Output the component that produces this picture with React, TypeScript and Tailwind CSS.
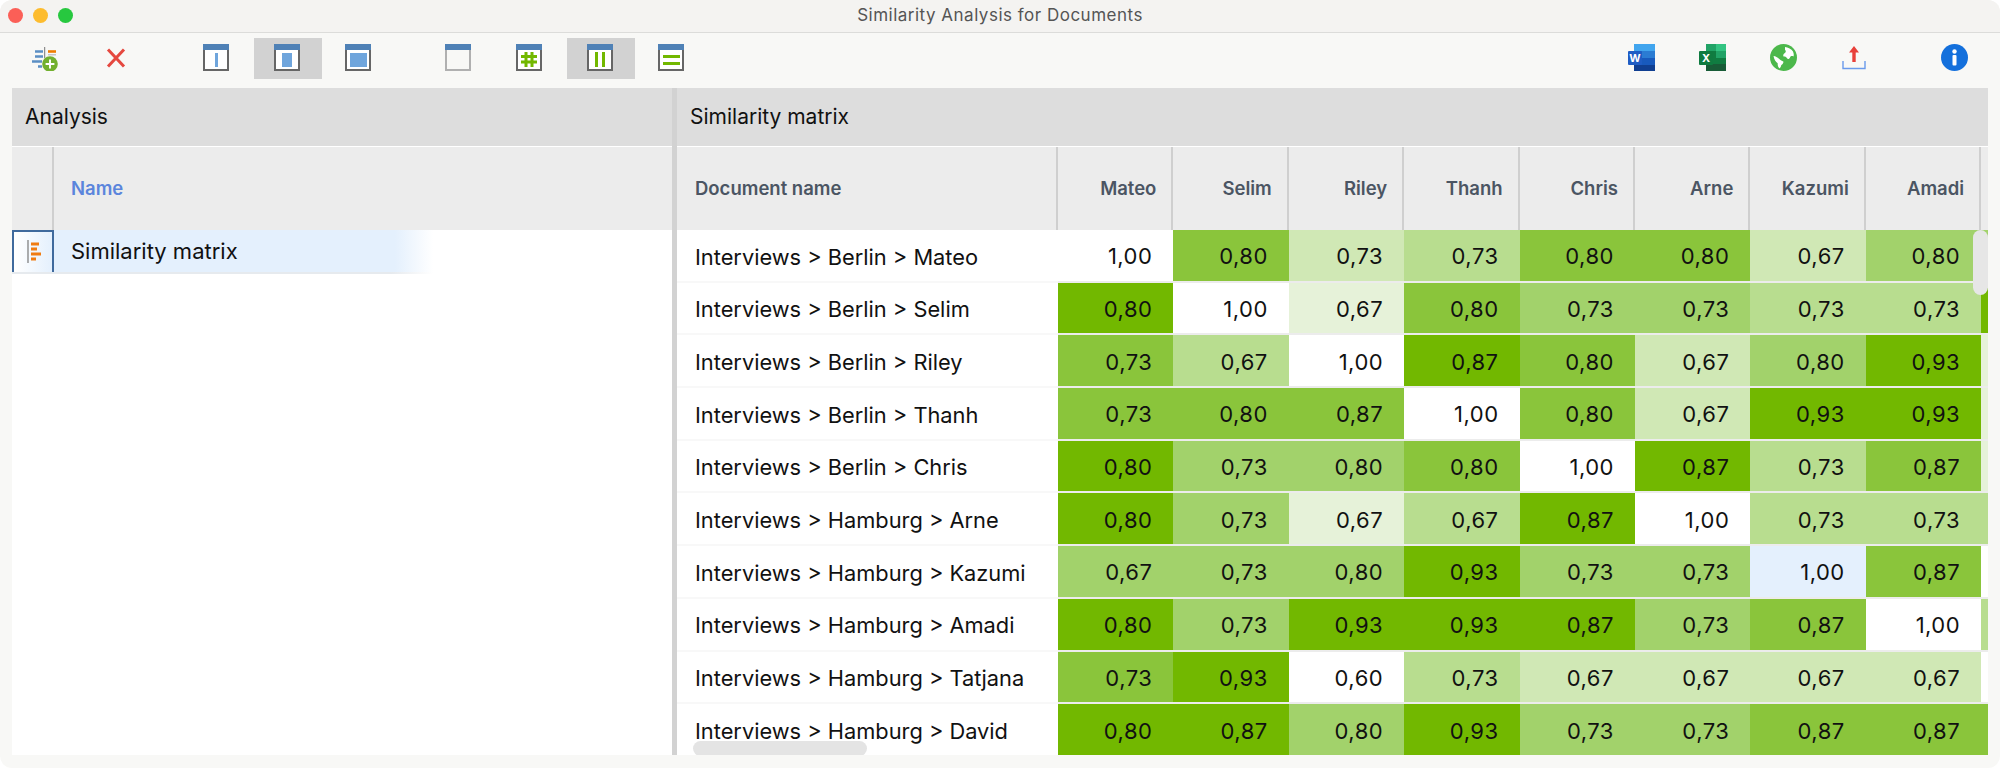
const palette: Record<string, string> = {
  w: 'bg-white',
  b: 'bg-[#e4f0fd]',
  a: 'bg-[#72b800]',
  c: 'bg-[#8ac53b]',
  d: 'bg-[#a2d26b]',
  e: 'bg-[#b8dd8f]',
  f: 'bg-[#d0e8b5]',
  g: 'bg-[#e6f2d9]',
}

const columns = ['Mateo', 'Selim', 'Riley', 'Thanh', 'Chris', 'Arne', 'Kazumi', 'Amadi']

const rows = [
  { name: 'Interviews > Berlin > Mateo', values: ['1,00', '0,80', '0,73', '0,73', '0,80', '0,80', '0,67', '0,80'], shades: 'wcfeccfdd' },
  { name: 'Interviews > Berlin > Selim', values: ['0,80', '1,00', '0,67', '0,80', '0,73', '0,73', '0,73', '0,73'], shades: 'awgcddeea' },
  { name: 'Interviews > Berlin > Riley', values: ['0,73', '0,67', '1,00', '0,87', '0,80', '0,67', '0,80', '0,93'], shades: 'cewacfdag' },
  { name: 'Interviews > Berlin > Thanh', values: ['0,73', '0,80', '0,87', '1,00', '0,80', '0,67', '0,93', '0,93'], shades: 'cccwcfaag' },
  { name: 'Interviews > Berlin > Chris', values: ['0,80', '0,73', '0,80', '0,80', '1,00', '0,87', '0,73', '0,87'], shades: 'addcwaecg' },
  { name: 'Interviews > Hamburg > Arne', values: ['0,80', '0,73', '0,67', '0,67', '0,87', '1,00', '0,73', '0,73'], shades: 'adgeaweee' },
  { name: 'Interviews > Hamburg > Kazumi', values: ['0,67', '0,73', '0,80', '0,93', '0,73', '0,73', '1,00', '0,87'], shades: 'dddaddbcw' },
  { name: 'Interviews > Hamburg > Amadi', values: ['0,80', '0,73', '0,93', '0,93', '0,87', '0,73', '0,87', '1,00'], shades: 'adaaadcwe' },
  { name: 'Interviews > Hamburg > Tatjana', values: ['0,73', '0,93', '0,60', '0,73', '0,67', '0,67', '0,67', '0,67'], shades: 'caweffffw' },
  { name: 'Interviews > Hamburg > David', values: ['0,80', '0,87', '0,80', '0,93', '0,73', '0,73', '0,87', '0,87'], shades: 'aadaddccc' },
]

function WindowIcon({ muted, children }: { muted?: boolean; children?: React.ReactNode }) {
  return (
    <div className={`flex h-[27px] w-[26px] flex-col border-x-2 border-b-2 ${muted ? 'border-[#b0b0b0]' : 'border-[#666]'}`}>
      <div className="-mx-[2px] h-[6px] shrink-0 bg-[#4f81b6]" />
      <div className={`flex flex-1 items-center justify-center gap-[4px] ${muted ? 'bg-[#f8f8f6]' : 'bg-white'}`}>{children}</div>
    </div>
  )
}

function ToolButton({ active, children }: { active?: boolean; children: React.ReactNode }) {
  return (
    <div className="flex h-[41px] w-[71px] items-center justify-center">
      <div className={`flex h-[41px] w-[68px] items-center justify-center pb-[2px] pr-[1px] ${active ? 'bg-[#d2d2d2]' : ''}`}>{children}</div>
    </div>
  )
}

function AddIcon() {
  return (
    <svg width="30" height="26" viewBox="30 44 30 26">
      <path d="M44.7 46v11" stroke="#777" strokeWidth="1" />
      <path d="M35 50.5h8M35 55.5h8M32 60.5h10M38 65.5h4" stroke="#5b8fc4" strokeWidth="2.6" />
      <path d="M48 50.5h8" stroke="#ef7d00" strokeWidth="2.6" />
      <path d="M48 53.8h8" stroke="#b9b9b9" strokeWidth="1.2" />
      <circle cx="50" cy="63" r="7.8" fill="#72b02e" />
      <path d="M50 58.6v8.8M45.6 63h8.8" stroke="#fff" strokeWidth="1.9" />
    </svg>
  )
}

function WordIcon() {
  return (
    <svg width="27" height="27" viewBox="0 0 27 27">
      <rect x="6" y="0" width="21" height="7" fill="#41a5ee" />
      <rect x="6" y="7" width="21" height="7" fill="#2b7cd3" />
      <rect x="6" y="14" width="21" height="7" fill="#185abd" />
      <rect x="6" y="21" width="21" height="6" fill="#103f91" />
      <rect x="0" y="7" width="14" height="14" rx="1" fill="#1f5dc4" />
      <text x="7" y="18" textAnchor="middle" fontSize="11" fontWeight="700" fill="#fff" fontFamily="Inter, sans-serif">W</text>
    </svg>
  )
}

function ExcelIcon() {
  return (
    <svg width="27" height="27" viewBox="0 0 27 27">
      <rect x="7" y="0" width="10" height="7" fill="#21a366" />
      <rect x="17" y="0" width="10" height="7" fill="#33c481" />
      <rect x="7" y="7" width="10" height="13" fill="#107c41" />
      <rect x="17" y="7" width="10" height="7" fill="#21a366" />
      <rect x="17" y="14" width="10" height="6" fill="#107c41" />
      <rect x="7" y="20" width="20" height="7" fill="#185c37" />
      <rect x="0" y="7" width="14" height="14" rx="1" fill="#0f7b40" />
      <text x="7" y="18" textAnchor="middle" fontSize="11" fontWeight="700" fill="#fff" fontFamily="Inter, sans-serif">X</text>
    </svg>
  )
}

function GlobeIcon() {
  return (
    <svg width="27" height="27" viewBox="0 0 27 27">
      <circle cx="13.5" cy="13.5" r="13.5" fill="#4cb84b" />
      <path d="M15 3c3 .4 6.5 1.8 8 4.5.8 2 1 3.5.5 5-1.5-.8-2.8-.5-3.5 1-.6 1.6-2.3 2-3 .8-.7-1.3-1.8-2-3.5-1.8-.6-1.3-.2-2.5 1-3.3 1.500-1 1.800-2 .5-3.500z" fill="#fff" />
      <path d="M3.5 12c2.200.3 4 1.200 5.500 2.800 1.500 1.400 3 2 4.500 3-.2 1.700-1 2.500-2.200 3.200-.3 1.500-.8 2.600-1.800 3.500-1.400-1.500-2-3.300-1.800-5.300-2-1.300-3.500-3.700-4.200-7.200z" fill="#fff" />
    </svg>
  )
}

function UploadIcon() {
  return (
    <svg width="24" height="27" viewBox="0 0 24 27">
      <path d="M1 17v7.500h22V17" fill="none" stroke="#6a9aec" strokeWidth="1.4" />
      <path d="M12 2l5 6.500h-3.300V18h-3.400V8.500H7z" fill="#e8403a" />
    </svg>
  )
}

function InfoIcon() {
  return (
    <svg width="27" height="27" viewBox="0 0 27 27">
      <circle cx="13.5" cy="13.5" r="13.5" fill="#1470dc" />
      <circle cx="13.5" cy="7.5" r="2.2" fill="#fff" />
      <rect x="11.5" y="11" width="4" height="10.5" rx="1" fill="#fff" />
    </svg>
  )
}

function ChartGlyph() {
  return (
    <svg width="14" height="24" viewBox="0 0 14 24">
      <path d="M1 0v23" stroke="#777" strokeWidth="1.2" />
      <path d="M4 4h8M4 9h6M4 14h10M4 19h5" stroke="#f07c12" strokeWidth="3" />
    </svg>
  )
}

export default function App() {
  return (
    <div className="h-[768px] w-[2000px] overflow-hidden bg-white font-['Inter',sans-serif]">
      <div className="flex h-full flex-col rounded-[12px] bg-[#f8f8f6]">
        {/* Title bar */}
        <div className="relative flex h-[33px] shrink-0 items-center justify-center rounded-t-[12px] border-b border-[#dcdcda] bg-[#f4f3f1]">
          <div className="absolute left-[8px] top-[8px] flex gap-[10px]">
            <div className="h-[15px] w-[15px] rounded-full bg-[#fb5f57]" />
            <div className="h-[15px] w-[15px] rounded-full bg-[#fdbc2e]" />
            <div className="h-[15px] w-[15px] rounded-full bg-[#27c83f]" />
          </div>
          <span className="text-[17px] tracking-[0.5px] text-[#555]">Similarity Analysis for Documents</span>
        </div>

        {/* Toolbar */}
        <div className="flex h-[55px] shrink-0 items-start pl-[10px] pr-[10px] pt-[5px]">
          <ToolButton><AddIcon /></ToolButton>
          <ToolButton>
            <svg width="20" height="20" viewBox="0 0 20 20"><path d="M2 1.5l16 17M18 1.5l-16 17" stroke="#e5483f" strokeWidth="3" /></svg>
          </ToolButton>
          <div className="ml-[29px] flex">
            <ToolButton><WindowIcon><div className="h-[14px] w-[3px] bg-[#6fa5dc]" /></WindowIcon></ToolButton>
            <ToolButton active><WindowIcon><div className="h-[14px] w-[10px] bg-[#6fa5dc]" /></WindowIcon></ToolButton>
            <ToolButton><WindowIcon><div className="h-[14px] w-[17px] bg-[#6fa5dc]" /></WindowIcon></ToolButton>
          </div>
          <div className="ml-[29px] flex">
            <ToolButton><WindowIcon muted /></ToolButton>
            <ToolButton>
              <WindowIcon>
                <svg width="18" height="17" viewBox="0 0 18 17"><path d="M6 1v15M12 1v15M1 5.5h16M1 11h16" stroke="#72b800" strokeWidth="3" /></svg>
              </WindowIcon>
            </ToolButton>
            <ToolButton active>
              <WindowIcon>
                <div className="h-[15px] w-[3px] bg-[#72b800]" />
                <div className="h-[15px] w-[3px] bg-[#72b800]" />
              </WindowIcon>
            </ToolButton>
            <ToolButton>
              <WindowIcon>
                <div className="flex flex-col gap-[4px]">
                  <div className="h-[3px] w-[17px] bg-[#72b800]" />
                  <div className="h-[3px] w-[17px] bg-[#72b800]" />
                </div>
              </WindowIcon>
            </ToolButton>
          </div>
          <div className="ml-auto flex">
            <ToolButton><WordIcon /></ToolButton>
            <ToolButton><ExcelIcon /></ToolButton>
            <ToolButton><GlobeIcon /></ToolButton>
            <ToolButton><UploadIcon /></ToolButton>
            <div className="ml-[29px]"><ToolButton><InfoIcon /></ToolButton></div>
          </div>
        </div>

        {/* Panels */}
        <div className="mx-[12px] flex h-[667px] shrink-0">
          <div className="flex w-[660px] shrink-0 flex-col bg-white">
            <div className="flex h-[58px] shrink-0 items-center bg-[#dddddd] pl-[13px] text-[21px] text-[#111]">Analysis</div>
            <div className="mt-[1px] flex h-[83px] shrink-0 bg-[#ececec]">
              <div className="w-[42px] shrink-0 border-r-2 border-[#cfcfcf]" />
              <div className="flex items-center pl-[17px] text-[18.5px] font-semibold text-[#5b85dc]">Name</div>
            </div>
            <div className="flex h-[42px] w-[421px] shrink-0">
              <div className="flex w-[42px] shrink-0 items-center justify-center border-x-2 border-t-2 border-[#3f6a9d] bg-[linear-gradient(90deg,#fff,#e4f0fd)] pl-[1px]">
                <ChartGlyph />
              </div>
              <div className="flex flex-1 items-center bg-[linear-gradient(90deg,#e4f0fd_90%,#fff_100%)] pl-[17px] pt-[1px] text-[22px] text-[#111]">
                Similarity matrix
              </div>
            </div>
            <div className="h-[2px] w-[421px] shrink-0 bg-[linear-gradient(90deg,#e6eaee_90%,#fff_100%)]" />
          </div>

          <div className="w-[5px] shrink-0 bg-[#d2d2d2]" />

          <div className="flex min-w-0 flex-1 flex-col bg-white">
            <div className="flex h-[58px] shrink-0 items-center bg-[#dddddd] pl-[13px] text-[21px] text-[#111]">Similarity matrix</div>
            <div className="mt-[1px] flex h-[83px] shrink-0 bg-[#ececec] text-[18.5px] font-semibold text-[#4b5563]">
              <div className="flex w-[381px] shrink-0 items-center border-r-2 border-[#cfcfcf] pl-[18px]">Document name</div>
              {columns.map(c => (
                <div key={c} className="flex w-[115.4px] shrink-0 items-center justify-end border-r-2 border-[#cfcfcf] pr-[15px]">{c}</div>
              ))}
            </div>
            <div className="relative min-h-0 flex-1 overflow-hidden">
              {rows.map(r => (
                <div key={r.name} className="flex h-[52.7px] text-[#111]">
                  <div className="flex w-[381px] shrink-0 items-center border-b-2 border-[#f8f8f8] pl-[18px] pt-[3px] text-[21.8px]">{r.name}</div>
                  {r.values.map((v, i) => (
                    <div key={i} className={`flex w-[115.4px] shrink-0 items-center justify-end border-b-2 border-[#ececec] pr-[21px] pt-[3px] text-[22px] tracking-[0.5px] ${palette[r.shades[i]]}`}>{v}</div>
                  ))}
                  <div className={`flex-1 border-b-2 border-[#ececec] ${palette[r.shades[8]]}`} />
                </div>
              ))}
              {/* overlay scrollbars */}
              <div className="absolute left-[16px] top-[511px] h-[15px] w-[174px] rounded-full bg-[#e4e4e4]" />
              <div className="absolute right-0 top-0 h-[65px] w-[15px] rounded-full bg-[#e6e6e6]" />
            </div>
          </div>
        </div>
      </div>
    </div>
  )
}
